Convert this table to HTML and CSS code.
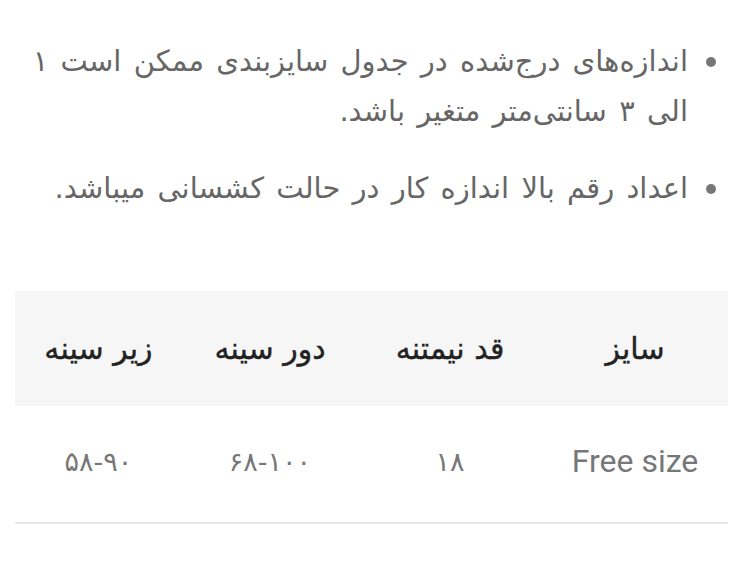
FILE: index.html
```html
<!DOCTYPE html>
<html lang="fa" dir="rtl">
<head>
<meta charset="utf-8">
<link rel="stylesheet" href="styles.css">
</head>
<body>
<div class="page">
  <ul class="notes">
    <li>اندازه‌های درج‌شده در جدول سایزبندی ممکن است ۱ الی ۳ سانتی‌متر متغیر باشد.</li>
    <li>اعداد رقم بالا اندازه کار در حالت کشسانی میباشد.</li>
  </ul>
  <table class="sizes">
    <colgroup>
      <col class="c1"><col class="c2"><col class="c3"><col class="c4">
    </colgroup>
    <thead>
      <tr><th>سایز</th><th>قد نیمتنه</th><th>دور سینه</th><th>زیر سینه</th></tr>
    </thead>
    <tbody>
      <tr><td class="latin">Free size</td><td>۱۸</td><td>۶۸-۱۰۰</td><td>۵۸-۹۰</td></tr>
    </tbody>
  </table>
</div>
</body>
</html>
```

FILE: styles.css
```css
html, body {
  margin: 0;
  padding: 0;
  background: #ffffff;
}
body {
  font-family: "DejaVu Sans", sans-serif;
  direction: rtl;
}
.page {
  padding: 36px 22px 0 15px;
}
.notes {
  margin: 0;
  padding: 0 40px 0 0;
  list-style: none;
  color: #666666;
  font-size: 29px;
  line-height: 50px;
  word-spacing: 3px;
}
.notes li {
  position: relative;
  margin-bottom: 27px;
}
.notes li::before {
  content: "";
  position: absolute;
  right: -28px;
  top: 21px;
  width: 10px;
  height: 10px;
  border-radius: 50%;
  background: #777777;
}
.sizes {
  width: 713px;
  margin-top: 78px;
  border-collapse: collapse;
  table-layout: fixed;
  direction: rtl;
}
.c1 { width: 186px; }
.c2 { width: 184px; }
.c3 { width: 176px; }
.c4 { width: 167px; }
.sizes th {
  background: #f6f6f6;
  color: #222222;
  font-weight: normal;
  -webkit-text-stroke: 0.4px #222222;
  font-size: 30px;
  height: 115px;
  padding: 0;
  text-align: center;
}
.sizes td {
  color: #777777;
  font-size: 27px;
  height: 110px;
  padding: 0 0 6px;
  text-align: center;
  border-bottom: 2px solid #e8e8e8;
}
.sizes td.latin {
  font-family: Roboto, sans-serif;
  font-size: 32px;
}
```
